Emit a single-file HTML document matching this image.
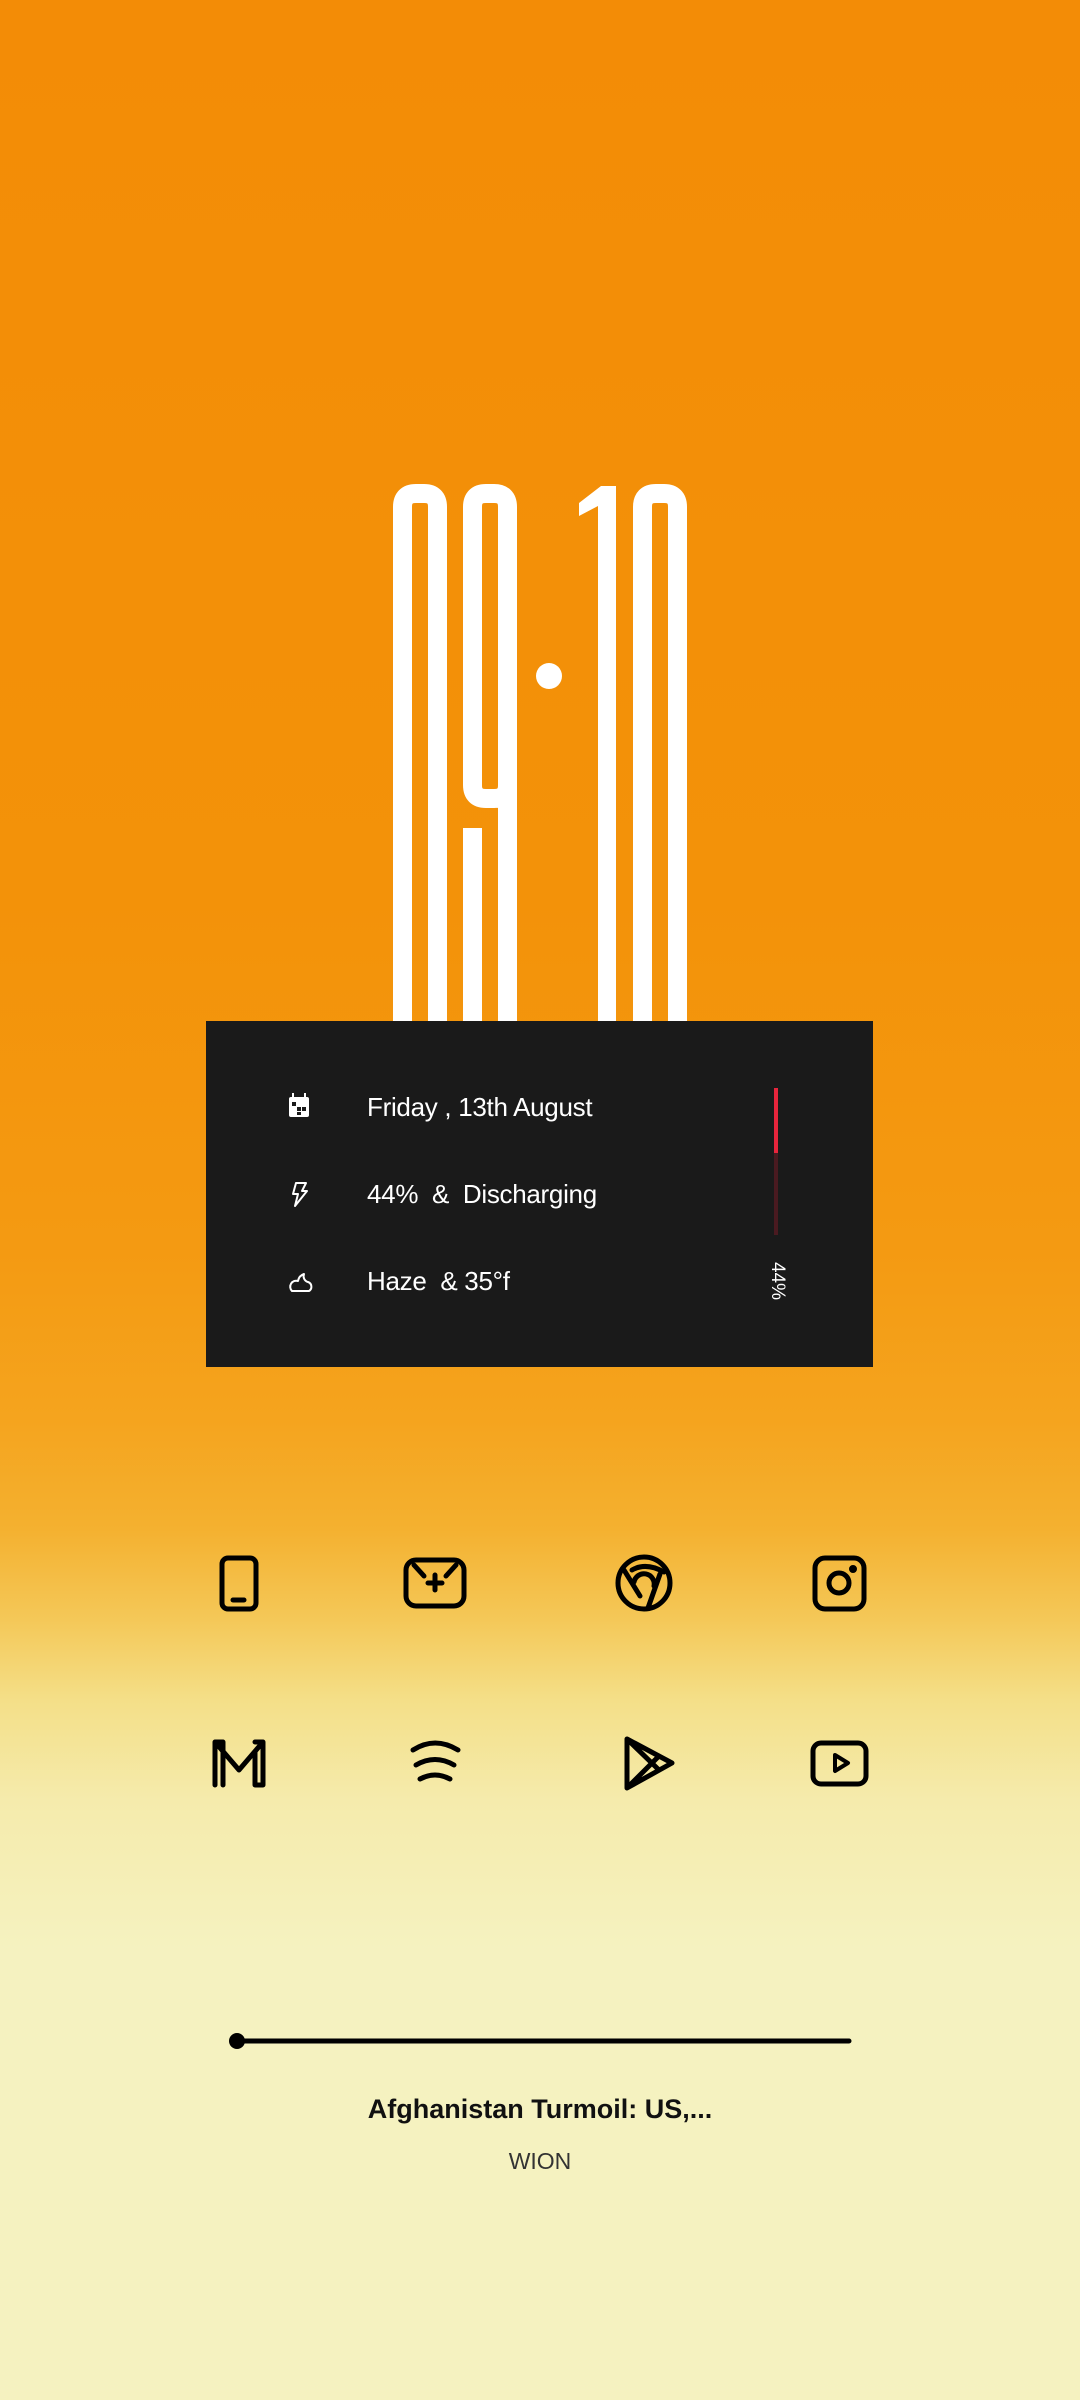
<!DOCTYPE html>
<html><head><meta charset="utf-8"><style>
html,body{margin:0;padding:0}
body{width:1080px;height:2400px;position:relative;overflow:hidden;font-family:"Liberation Sans",sans-serif;
background:linear-gradient(to bottom,#f38c06 0px,#f39209 900px,#f49a12 1250px,#f5a41e 1420px,#f4b130 1530px,#f4c858 1620px,#f4df88 1700px,#f5ebac 1800px,#f5f2c0 1950px,#f5f2c0 2400px);}
.panel{position:absolute;left:206px;top:1021px;width:667px;height:346px;background:#1a1a1a}
.t{position:absolute;left:367px;color:#fff;font-size:26px;letter-spacing:-0.3px;line-height:30px}
</style></head><body>
<svg width="1080" height="2400" style="position:absolute;left:0;top:0">
<g fill="none" stroke="#fff" stroke-width="19">
<path d="M402.5,1030 V507 Q402.5 493.5 416 493.5 H424 Q437.5 493.5 437.5 507 V1030"/>
<path d="M507.5,1030 V507 Q507.5 493.5 494 493.5 H486 Q472.5 493.5 472.5 507 V785 Q472.5 798.5 486 798.5 H494 Q507.5 798.5 507.5 785"/>
<path d="M642.5,1030 V507 Q642.5 493.5 656 493.5 H664 Q677.5 493.5 677.5 507 V1030"/>
</g>
<g fill="#fff">
<rect x="463" y="828" width="19" height="200"/>
<circle cx="549" cy="676" r="13"/>
<polygon points="579,503 601,486 616,486 616,1030 598,1030 598,506 579,516"/>
</g>
</svg>
<div class="panel"></div>
<svg width="1080" height="2400" style="position:absolute;left:0;top:0">
<g fill="#fff">
<rect x="289" y="1097" width="20" height="20" rx="2"/>
<rect x="292" y="1093" width="2" height="5"/><rect x="304" y="1093" width="2" height="5"/>
</g>
<g fill="#1a1a1a"><rect x="292" y="1102" width="4" height="4"/><rect x="297" y="1107" width="4" height="4"/><rect x="302" y="1107" width="4" height="4"/><rect x="297" y="1112" width="4" height="3"/></g>
<path d="M296 1183 L306 1183 L302 1191 L307 1191 L295 1206 L298 1194 L293 1194 Z" fill="none" stroke="#fff" stroke-width="2" stroke-linejoin="round"/>
<path d="M292 1291 H309 A5 5 0 0 0 308 1282 A6 6 0 0 1 304 1274 A9 9 0 0 0 298 1281 A6 6 0 0 0 292 1291 Z" fill="none" stroke="#fff" stroke-width="2" stroke-linejoin="round"/>
<rect x="774" y="1088" width="4" height="65" fill="#e8253c"/>
<rect x="774" y="1153" width="4" height="82" fill="#4a1a20"/>
<g fill="none" stroke="#000" stroke-width="5" stroke-linecap="round" stroke-linejoin="round">
<rect x="222" y="1558" width="34" height="51" rx="6"/>
<line x1="233" y1="1600" x2="244" y2="1600"/>
<rect x="406" y="1560" width="58" height="46" rx="10"/>
<path d="M414 1565 L424 1576 M456 1565 L446 1576 M435 1575 V1590 M428 1583 H442"/>
<ellipse cx="644" cy="1583" rx="26" ry="26"/>
<path d="M624 1570 L640 1596 M632 1570 Q646 1562 664 1572 M660 1574 L648 1608 M634 1582 A10 10 0 1 1 654 1586"/>
<rect x="815" y="1558" width="49" height="51" rx="10"/>
<circle cx="839" cy="1583" r="10"/>
<circle cx="853" cy="1569" r="1.5" fill="#000"/>
<path d="M215 1785 V1742 L239 1770 L263 1742 V1785 H255 V1752 M215 1742 H223 V1785 M263 1742 H255"/>
<path d="M413 1750 Q435 1736 458 1750 M416 1765 Q435 1754 454 1765 M420 1779 Q435 1771 450 1779"/>
<path d="M627 1739 L672 1763 L627 1788 Z M627 1788 L659 1756 M627 1739 L659 1770"/>
<rect x="813" y="1743" width="53" height="41" rx="8"/>
<path d="M835 1755 L848 1763 L835 1771 Z" stroke-width="4"/>
<line x1="237" y1="2041" x2="849" y2="2041" stroke-width="5"/>
</g>
<circle cx="237" cy="2041" r="8" fill="#000"/>
</svg>
<div class="t" style="top:1092px">Friday , 13th August</div>
<div class="t" style="top:1179px">44%&nbsp; &amp;&nbsp; Discharging</div>
<div class="t" style="top:1266px">Haze&nbsp; &amp; 35°f</div>
<div style="position:absolute;left:756px;top:1269px;width:40px;height:24px;color:#fff;font-size:19px;text-align:center;transform:rotate(90deg)">44%</div>
<div style="position:absolute;left:0;width:1080px;top:2094px;text-align:center;font-size:27px;font-weight:bold;color:#111">Afghanistan Turmoil: US,...</div>
<div style="position:absolute;left:0;width:1080px;top:2148px;text-align:center;font-size:23px;color:#333">WION</div>
</body></html>
